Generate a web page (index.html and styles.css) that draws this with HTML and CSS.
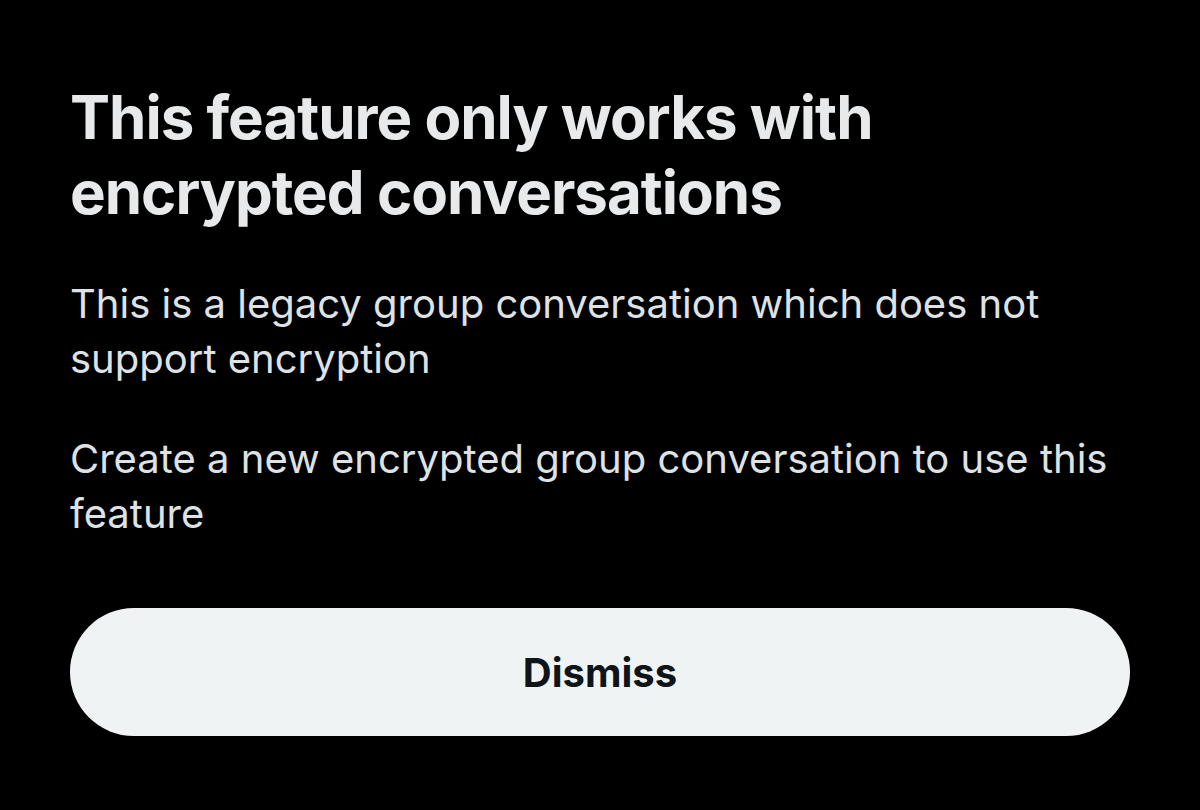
FILE: index.html
```html
<!DOCTYPE html>
<html lang="en">
<head>
<meta charset="utf-8">
<title>Feature unavailable</title>
<link rel="stylesheet" href="styles.css">
</head>
<body>
  <main class="sheet">
    <h1 class="title">This feature only works with encrypted conversations</h1>
    <p class="text">This is a legacy group conversation which does not support encryption</p>
    <p class="text">Create a new encrypted group conversation to use this feature</p>
    <button class="btn" type="button">Dismiss</button>
  </main>
</body>
</html>
```
FILE: styles.css
```css
html, body {
  margin: 0;
  padding: 0;
  background: #000000;
  height: 100%;
}
body {
  font-family: Inter, "Noto Sans", "Liberation Sans", sans-serif;
  color: #e7e9ea;
}
.sheet {
  box-sizing: border-box;
  width: 1200px;
  height: 810px;
  padding: 80px 70px 0 70px;
  display: flex;
  flex-direction: column;
}
.title {
  margin: 0 0 46px 0;
  font-size: 60px;
  line-height: 75px;
  font-weight: 700;
  letter-spacing: -1px;
  color: #e7e9ea;
  max-width: 900px;
}
.text {
  margin: 0 0 45px 0;
  font-size: 40px;
  line-height: 55px;
  font-weight: 400;
  color: #dfe2e4;
}
.text + .btn {
  margin-top: 22px;
}
.btn {
  align-self: stretch;
  height: 128px;
  border: none;
  border-radius: 64px;
  background: #eff3f4;
  color: #0f1419;
  font-family: Inter, "Noto Sans", "Liberation Sans", sans-serif;
  font-size: 40px;
  font-weight: 700;
  cursor: pointer;
}
```
